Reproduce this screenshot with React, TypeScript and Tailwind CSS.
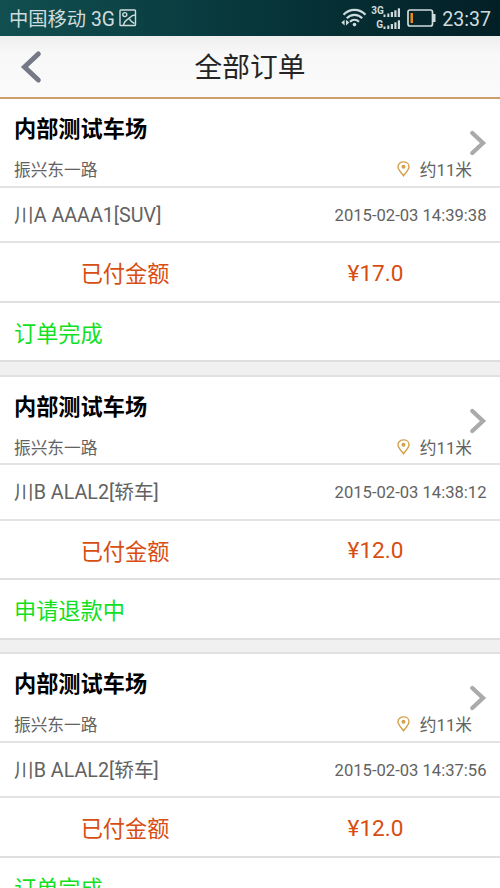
import React from "react";

interface Order {
  plate: string;
  time: string;
  amount: string;
  status: string;
}

const orders: Order[] = [
  { plate: "川A AAAA1[SUV]", time: "2015-02-03 14:39:38", amount: "¥17.0", status: "订单完成" },
  { plate: "川B ALAL2[轿车]", time: "2015-02-03 14:38:12", amount: "¥12.0", status: "申请退款中" },
  { plate: "川B ALAL2[轿车]", time: "2015-02-03 14:37:56", amount: "¥12.0", status: "订单完成" },
];

function PictureIcon() {
  return (
    <svg className="ml-[4px] h-[18px] w-[18px]" viewBox="0 0 18 18" fill="none" stroke="currentColor" strokeWidth="1.4">
      <rect x="1" y="1" width="15.5" height="15.5" rx="0.8" />
      <circle cx="5.8" cy="5.6" r="2" />
      <path d="M4.5 16.5C5 11 9.5 10.5 11 8.5C12.3 6.8 14 6 16.5 6M10.5 10.2C11.5 12 13 13.5 15.5 14.5" />
    </svg>
  );
}

function WifiIcon() {
  return (
    <svg className="h-[20px] w-[26px]" viewBox="0 0 26 20" fill="none" stroke="currentColor" strokeWidth="2.1">
      <path d="M2.5 6.8C8.5 0.2 18.5 0.2 24.5 6.8" />
      <path d="M5.8 10.3C10 5.7 17 5.7 21.2 10.3" />
      <path d="M9 13.7C11.5 11 15.5 11 18 13.7" />
      <circle cx="13.5" cy="16.6" r="1.8" fill="currentColor" stroke="none" />
      <path d="M3.6 11.8V17.4L0.3 14.6ZM5 11.8V17.4L8.3 14.6Z" fill="currentColor" stroke="none" />
    </svg>
  );
}

function Bars() {
  return (
    <svg className="h-[9px] w-[18px]" viewBox="0 0 18 9" fill="currentColor">
      <rect x="0.5" y="6.5" width="2" height="2.5" />
      <rect x="4.3" y="5.5" width="2" height="3.5" />
      <rect x="7.8" y="4" width="2.2" height="5" />
      <rect x="11.3" y="2.3" width="2.2" height="6.7" />
      <rect x="14.8" y="0.3" width="2.2" height="8.7" />
    </svg>
  );
}

function BatteryIcon() {
  return (
    <svg className="ml-[6px] h-[18px] w-[29px]" viewBox="0 0 29 18" fill="none">
      <rect x="1" y="1" width="24.5" height="16" rx="2" stroke="currentColor" strokeWidth="1.7" />
      <rect x="26" y="5" width="2.5" height="8" fill="currentColor" />
      <rect x="3.5" y="4" width="2.5" height="10" fill="#e88918" />
    </svg>
  );
}

function StatusBar() {
  return (
    <div className="flex h-[36px] items-center bg-gradient-to-r from-[#124f50] via-[#07373b] to-[#031f26] pr-[9px] pl-[9px] text-[#cfdcdd]">
      <span className="pt-[3px] text-[19.3px] leading-none whitespace-pre">中国移动 3G</span>
      <PictureIcon />
      <div className="ml-auto flex items-center">
        <WifiIcon />
        <div className="ml-[4px] flex flex-col gap-[3px]">
          <div className="flex h-[9px] items-end">
            <span className="w-[12px] self-start text-left text-[10px] leading-[6px] font-bold">3G</span>
            <Bars />
          </div>
          <div className="flex h-[9px] items-end">
            <span className="w-[12px] pl-[5px] text-left text-[10px] leading-[9px] font-bold">G</span>
            <Bars />
          </div>
        </div>
        <BatteryIcon />
        <span className="ml-[6px] pt-[3px] text-[19.6px] leading-none">23:37</span>
      </div>
    </div>
  );
}

function TitleBar() {
  return (
    <header className="grid h-[63px] grid-cols-[60px_1fr_60px] items-center border-b-2 border-[#cf9c6c] bg-gradient-to-b from-[#eeeeee] via-[#f8f8f8] via-30% to-[#fafafa]">
      <svg className="ml-[20px] h-[34px] w-[22px]" viewBox="0 0 22 34" fill="none">
        <path d="M18.3 4L4.5 17L18.3 30" stroke="#757985" strokeWidth="5" strokeLinecap="round" />
      </svg>
      <h1 className="pt-[3px] text-center text-[27.7px] leading-none text-[#252525]">全部订单</h1>
    </header>
  );
}

function OrderCard({ order }: { order: Order }) {
  return (
    <section className="bg-white">
      <div className="flex h-[88.5px] flex-col border-b-2 border-[#e3e3e3] pr-[13px] pl-[14px]">
        <div className="flex h-[60px] justify-between">
          <h2 className="pt-[15px] text-[22.2px] leading-[30px] font-bold text-black">内部测试车场</h2>
          <svg className="mt-[30px] h-[28px] w-[18px]" viewBox="0 0 18 28" fill="none">
            <path d="M3.3 4L14 14L3.3 24" stroke="#aaaaaa" strokeWidth="4.3" strokeLinecap="round" />
          </svg>
        </div>
        <div className="flex items-center justify-between pr-[15px] text-[16.7px] leading-[24px] text-[#626262]">
          <span>振兴东一路</span>
          <span className="flex items-center">
            <svg className="mr-[10px] mb-[4px] h-[16px] w-[13px]" viewBox="0 0 13 16" fill="none">
              <path d="M6.5 14.8C4.3 11.8 1 8.8 1 5.8C1 2.8 3.5 0.9 6.5 0.9S12 2.8 12 5.8C12 8.8 8.7 11.8 6.5 14.8Z" stroke="#d3a14c" strokeWidth="1.4" />
              <circle cx="6.5" cy="5.8" r="2" fill="#d3a14c" />
            </svg>
            约11米
          </span>
        </div>
      </div>
      <div className="flex h-[55.5px] items-center justify-between border-b-2 border-[#e3e3e3] pt-[3px] pr-[13.5px] pl-[14px] text-[#626262]">
        <span className="text-[19.7px] leading-none">{order.plate}</span>
        <span className="pt-px text-[16.6px] leading-none">{order.time}</span>
      </div>
      <div className="grid h-[59.5px] grid-cols-2 items-center border-b-2 border-[#e0e0e0] pt-[5px] text-center text-[22.2px] leading-none text-[#d84d12]">
        <span>已付金额</span>
        <span className="pl-px text-[22.6px]">{order.amount}</span>
      </div>
      <div className="flex h-[59.5px] items-center border-b-2 border-[#dedede] pt-[5px] pl-[14px] text-[22.2px] leading-none text-[#12df22]">
        {order.status}
      </div>
      <div className="h-[14.5px] border-b-2 border-[#e1e1e1] bg-[#f0f0f0]" />
    </section>
  );
}

export default function App() {
  return (
    <div className="h-[888px] w-[500px] overflow-hidden bg-white font-[Roboto,'Noto_Sans_CJK_SC',sans-serif]">
      <StatusBar />
      <TitleBar />
      <main>
        {orders.map((order) => (
          <OrderCard key={order.time} order={order} />
        ))}
      </main>
    </div>
  );
}
